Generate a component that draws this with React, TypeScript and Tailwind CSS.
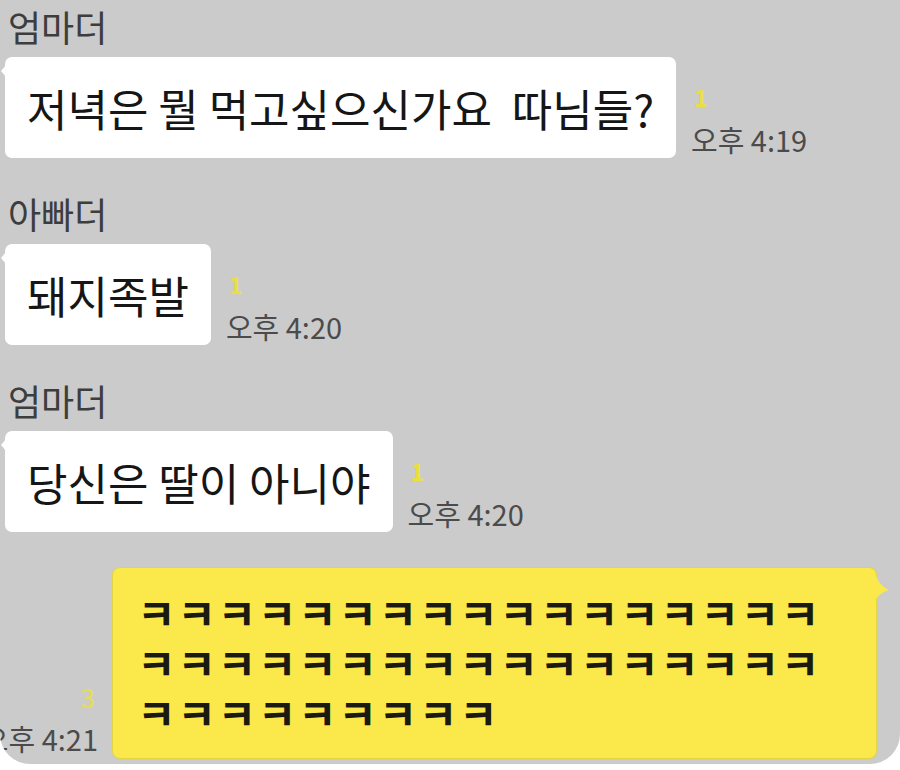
import React from "react";

// 카톡 대화 캡처 — 회색 배경, 흰 말풍선(받은 메시지), 노란 말풍선(보낸 메시지)
type IncomingProps = { name: string; text: string; time: string; className?: string };

function Incoming({ name, text, time, className = "" }: IncomingProps) {
  return (
    <div className={`pl-[5px] ${className}`}>
      <p className="ml-[3px] mb-[9px] text-[36px] leading-[44px] text-[#3d3d3d]">{name}</p>
      <div className="flex items-end gap-[15px]">
        <div className="relative h-[101px] flex items-center px-[22px] bg-white rounded-[7px]">
          {/* 말꼬리 */}
          <span className="absolute -left-[4px] top-[8px] w-0 h-0 border-t-[6px] border-b-[6px] border-r-[5px] border-t-transparent border-b-transparent border-r-white" />
          <p className="text-[44px] leading-none text-[#161616] whitespace-pre">{text}</p>
        </div>
        <div className="flex flex-col items-start pb-[3px]">
          <span className="ml-[3px] mb-[14px] text-[23px] leading-none font-bold text-[#ebdf3f]">1</span>
          <span className="text-[29px] leading-[32px] text-[#4b4b4b] whitespace-nowrap">{time}</span>
        </div>
      </div>
    </div>
  );
}

export default function App() {
  const laugh = "ㅋ".repeat(43);

  return (
    <div className="w-[900px] h-[770px] bg-white overflow-hidden font-['Noto_Sans_CJK_KR','Noto_Sans',sans-serif]">
      <div className="h-[764px] bg-[#cbcbcb] rounded-b-[30px] overflow-hidden pt-[4px]">
        <Incoming name="엄마더" text="저녁은 뭘 먹고싶으신가요  따님들?" time="오후 4:19" />
        <Incoming name="아빠더" text="돼지족발" time="오후 4:20" className="mt-[33px]" />
        <Incoming name="엄마더" text="당신은 딸이 아니야" time="오후 4:20" className="mt-[33px]" />

        {/* 보낸 메시지 */}
        <div className="mt-[36px] flex items-end justify-end gap-[15px] pr-[24px]">
          <div className="flex flex-col items-end shrink-0 pb-[4px]">
            <span className="mr-[3px] mb-[12px] text-[27px] leading-none text-[#e6dc55]">3</span>
            <span className="text-[29px] leading-[32px] text-[#4b4b4b] whitespace-nowrap">오후 4:21</span>
          </div>
          <div className="relative shrink-0 w-[763px] h-[190px] bg-[#fbe94b] rounded-[7px] pl-[24px] pt-[19px] shadow-[0_0_0_1px_#e3d444]">
            <svg className="absolute -right-[14px] top-[8px]" width="16" height="26" viewBox="0 0 16 26">
              <path d="M0 0 L2 0 Q6 10 15 14 Q6 16 0 26 Z" fill="#fbe94b" />
            </svg>
            <p className="w-[700px] text-[42px] leading-[50px] tracking-[1.6px] font-semibold text-[#1a1a10] break-all">
              {laugh}
            </p>
          </div>
        </div>
      </div>
    </div>
  );
}
